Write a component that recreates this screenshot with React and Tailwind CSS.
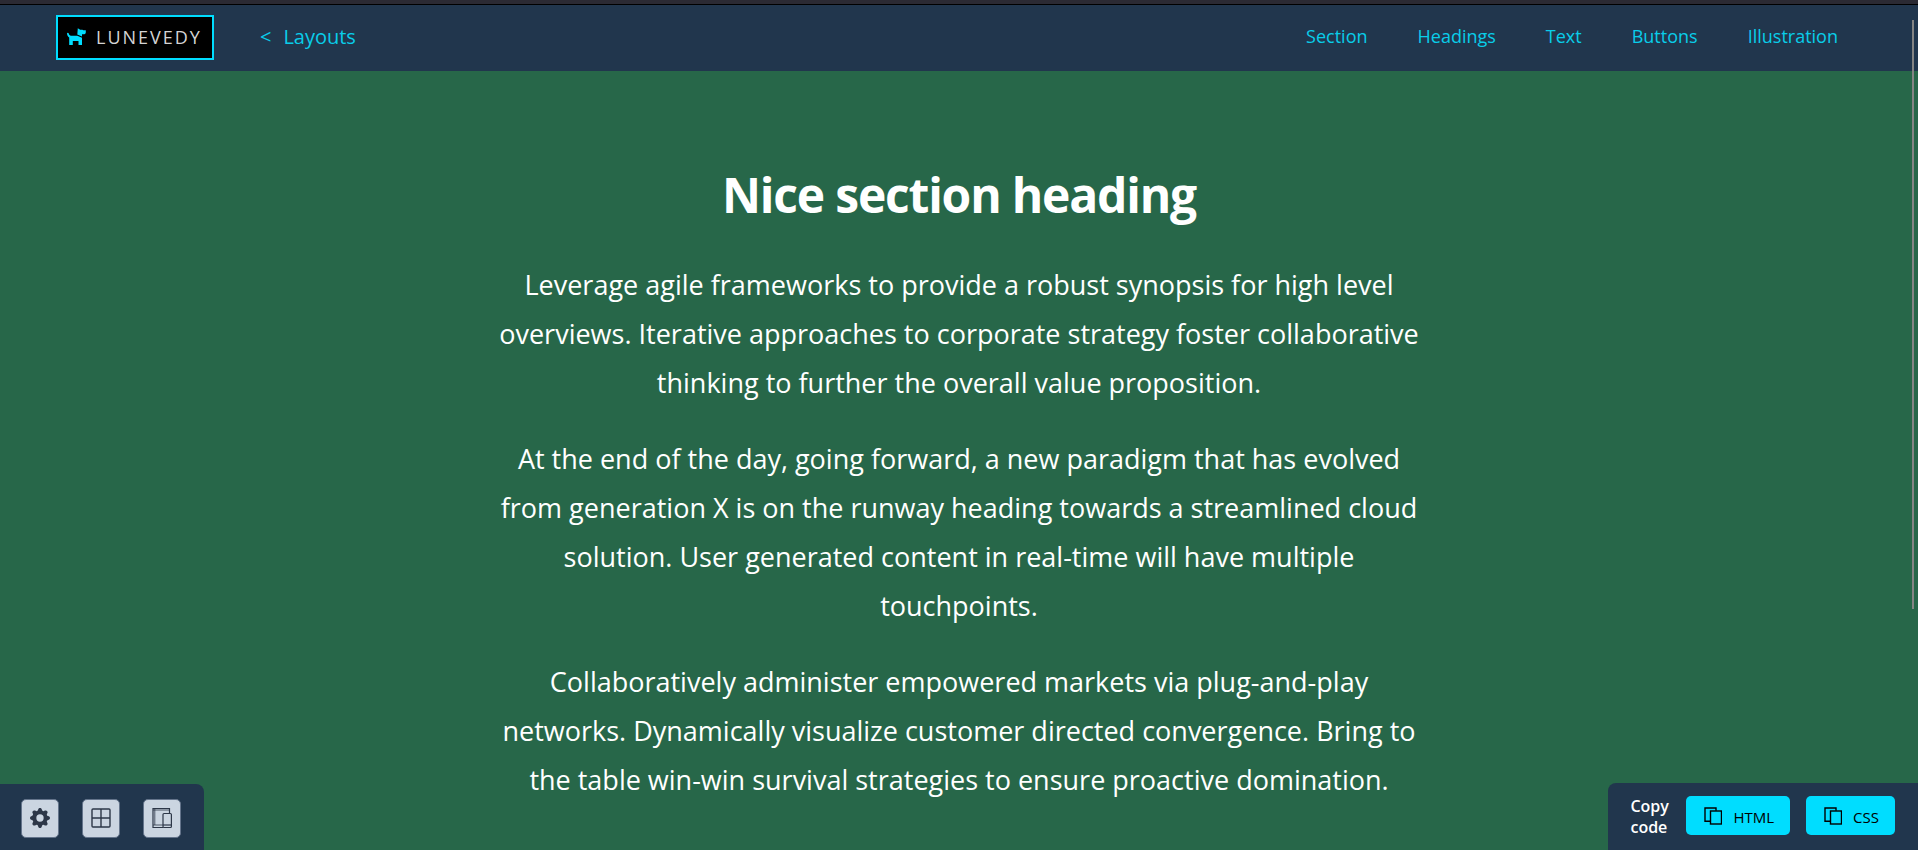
import { BsGearFill } from "react-icons/bs";

const navLinks = ["Section", "Headings", "Text", "Buttons", "Illustration"];

const paragraphs = [
  "Leverage agile frameworks to provide a robust synopsis for high level overviews. Iterative approaches to corporate strategy foster collaborative thinking to further the overall value proposition.",
  "At the end of the day, going forward, a new paradigm that has evolved from generation X is on the runway heading towards a streamlined cloud solution. User generated content in real-time will have multiple touchpoints.",
  "Collaboratively administer empowered markets via plug-and-play networks. Dynamically visualize customer directed convergence. Bring to the table win-win survival strategies to ensure proactive domination.",
];

function DogIcon() {
  return (
    <svg viewBox="0 0 19 17" className="mb-0.5 h-[17px] w-[19px] text-[#00ddff]" fill="currentColor" aria-hidden="true">
      <path d="M0 5.3C.3 4.5 1.5 4.6 1.8 5.5C2.1 6.8 2.8 7.7 4 7.7H10.3L15 9.8V17H11.5V13H5.8V17H2.2V9.6C.9 8.8 0 7 0 5.3Z" />
      <path d="M10.8 .3L13.2 1.7H15.5L16.3 2.2H18.8V4.2C18.8 5.6 17.9 6.3 16.5 6.3H15V8.6L10.3 6.5Z" />
    </svg>
  );
}

function GridIcon() {
  return (
    <svg viewBox="0 0 20 20" className="size-5" fill="none" stroke="currentColor" strokeWidth="1.4" aria-hidden="true">
      <rect x="1" y="1" width="18" height="18" rx="1" />
      <path d="M10 1v18M1 10h18" />
    </svg>
  );
}

function DevicesIcon() {
  return (
    <svg viewBox="0 0 20 22" className="h-[22px] w-5" fill="none" stroke="currentColor" strokeWidth="1.2" aria-hidden="true">
      <path d="M17.5 6V1.5H1V20.5h10" />
      <path d="M1 18h10M2.8 1.5v16.5M1 3h16.5" strokeWidth="0.8" />
      <rect x="11" y="6.5" width="8.4" height="14" rx="1" />
      <path d="M11 18h8.4" />
    </svg>
  );
}

function CopyIcon() {
  return (
    <svg viewBox="0 0 18 18" className="size-[18px]" fill="none" stroke="currentColor" strokeWidth="1.4" aria-hidden="true">
      <path d="M6 14.3H1V1h11v2.7" />
      <rect x="6.5" y="4" width="11" height="13" />
    </svg>
  );
}

function ToolButton({ label, children }) {
  return (
    <button
      type="button"
      aria-label={label}
      className="flex h-[39px] w-[38px] items-center justify-center rounded-[5px] border border-[#64748b] bg-[#cbd5e1] text-[#2d3748]"
    >
      {children}
    </button>
  );
}

function CopyButton({ children }) {
  return (
    <button type="button" className="flex h-[39px] items-center gap-[11px] rounded-[5px] bg-[#00ddff] pr-4 pl-[18px] text-[15px] text-black">
      <CopyIcon />
      <span className="pt-1">{children}</span>
    </button>
  );
}

export default function App() {
  return (
    <div className="min-h-screen bg-[#276749] font-['Open_Sans','Noto_Sans',sans-serif] text-white">
      <div className="h-[5px] border-b border-black bg-[#2b2a33]" />
      <header className="flex h-[66px] items-center justify-between bg-[#21364d] pr-20 pb-0.5 pl-14 text-[#09cde9]">
        <div className="flex items-center gap-[46px]">
          <a href="#home" className="flex h-[45px] items-center gap-2.5 border-2 border-[#00ddff] bg-black pr-2.5 pl-[9px]">
            <DogIcon />
            <span className="text-lg tracking-[2px] text-[#d4d4d4]">LUNEVEDY</span>
          </a>
          <a href="#layouts" className="flex gap-3 text-xl">
            <span>&lt;</span>
            <span>Layouts</span>
          </a>
        </div>
        <nav className="flex gap-[50px] pb-0.5 text-lg">
          {navLinks.map((name) => (
            <a key={name} href={"#" + name.toLowerCase()}>
              {name}
            </a>
          ))}
        </nav>
      </header>

      <main className="mx-auto max-w-[940px] pt-[90px] text-center">
        <h2 className="text-5xl leading-[68px] font-bold tracking-tight">Nice section heading</h2>
        <div className="mt-[31px] flex flex-col gap-[27px] text-[27px] leading-[49px]">
          {paragraphs.map((text) => (
            <p key={text}>{text}</p>
          ))}
        </div>
      </main>

      <div className="fixed bottom-0 left-0 flex h-[66px] items-center gap-[23px] rounded-tr-lg bg-[#21364d] pt-0.5 pr-[23px] pl-[21px]">
        <ToolButton label="Settings"><BsGearFill className="size-5" /></ToolButton>
        <ToolButton label="Grid"><GridIcon /></ToolButton>
        <ToolButton label="Devices"><DevicesIcon /></ToolButton>
      </div>

      <div className="fixed right-0 bottom-0 flex h-[67px] items-center gap-4 rounded-tl-lg bg-[#21364d] pr-[23px] pb-0.5 pl-[22px]">
        <p className="w-10 pt-0.5 text-base leading-[21px] font-semibold">Copy code</p>
        <CopyButton>HTML</CopyButton>
        <CopyButton>CSS</CopyButton>
      </div>

      <div className="fixed top-5 right-1 h-[589px] w-0.5 bg-[#858585]" />
    </div>
  );
}
